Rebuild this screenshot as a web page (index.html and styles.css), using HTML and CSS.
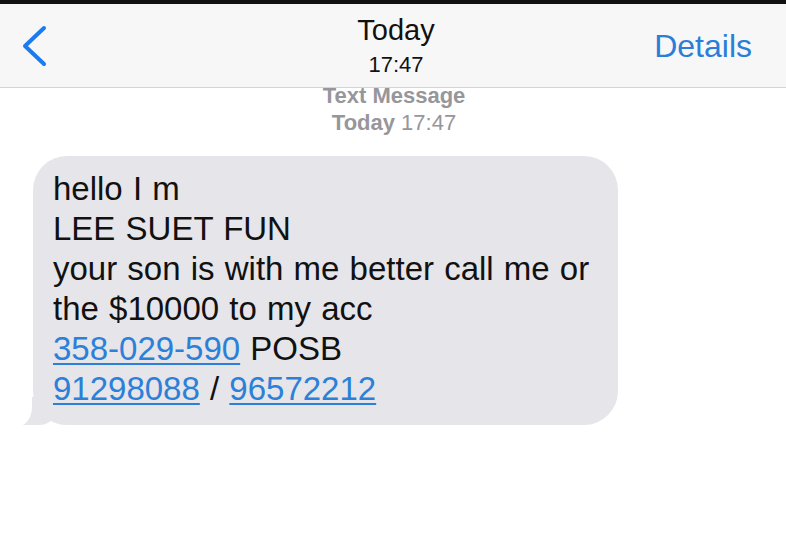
FILE: index.html
```html
<!DOCTYPE html>
<html lang="en">
<head>
    <meta charset="UTF-8">
    <title>Messages</title>
    <link rel="stylesheet" href="styles.css">
</head>
<body>
<div class="statusbar"></div>
<div class="nav">
    <a class="back" href="#">
        <svg width="28" height="44" viewBox="0 0 28 44"><path d="M23 4 L4 22 L23 40" fill="none" stroke="#1a7cf0" stroke-width="4" stroke-linecap="round" stroke-linejoin="round"/></svg>
    </a>
    <div class="title">
        <div class="day">Today</div>
        <div class="time">17:47</div>
    </div>
    <a class="details" href="#">Details</a>
</div>
<div class="thread">
    <div class="meta">
        <div class="kind">Text Message</div>
        <div class="stamp"><b>Today</b> 17:47</div>
    </div>
    <div class="bubble">
        hello I m<br>
        LEE SUET FUN<br>
        your son is with me better call me or<br>
        the $10000 to my acc<br>
        <a href="#">358-029-590</a> POSB<br>
        <a href="#">91298088</a> / <a href="#">96572212</a>
    </div>
</div>
</body>
</html>
```

FILE: styles.css
```css
*{margin: 0; padding: 0;}
body{
    background: #fff;
    font-family: "Liberation Sans", Arial, sans-serif;
    width: 786px;
    height: 550px;
    overflow: hidden;
}
.statusbar{
    height: 4px;
    background: #111;
}
.nav{
    height: 83px;
    background: #f7f7f8;
    border-bottom: 1px solid #d4d4d6;
    display: grid;
    grid-template-columns: 1fr auto 1fr;
    align-items: center;
    padding: 0 34px 0 21px;
    position: relative;
    z-index: 2;
}
.back{
    display: flex;
    justify-self: start;
}
.title{
    align-self: start;
    padding-top: 8px;
    margin-left: 19px;
    text-align: center;
    color: #111;
}
.day{
    font-size: 29px;
    line-height: 36px;
}
.time{
    font-size: 22px;
    line-height: 34px;
}
.details{
    justify-self: end;
    color: #2a7ed8;
    font-size: 32px;
    text-decoration: none;
    margin-top: 1px;
}
.meta{
    text-align: center;
    color: #96969b;
    font-size: 22px;
    font-weight: bold;
    margin: -6px 0 0 2px;
}
.kind{
    line-height: 27px;
}
.stamp{
    line-height: 27px;
    font-weight: normal;
}
.stamp b{
    font-weight: bold;
}
.bubble{
    position: relative;
    z-index: 0;
    margin: 20px 0 0 33px;
    width: 585px;
    box-sizing: border-box;
    padding: 13px 0 16px 20px;
    background: #e5e5ea;
    border-radius: 34px;
    font-size: 33px;
    line-height: 40px;
    word-spacing: 1px;
    color: #111;
}
.bubble a{
    color: #2c80d8;
    text-decoration: underline;
    text-decoration-thickness: 2px;
    text-underline-offset: 3px;
}
/* tail */
.bubble::before{
    content: "";
    position: absolute;
    z-index: -1;
    left: -15px;
    bottom: 0;
    width: 42px;
    height: 28px;
    background: #e5e5ea;
    border-bottom-right-radius: 20px 26px;
}
.bubble::after{
    content: "";
    position: absolute;
    z-index: -1;
    left: -31px;
    bottom: -2px;
    width: 30px;
    height: 32px;
    background: #fff;
    border-bottom-right-radius: 16px 20px;
}
```
